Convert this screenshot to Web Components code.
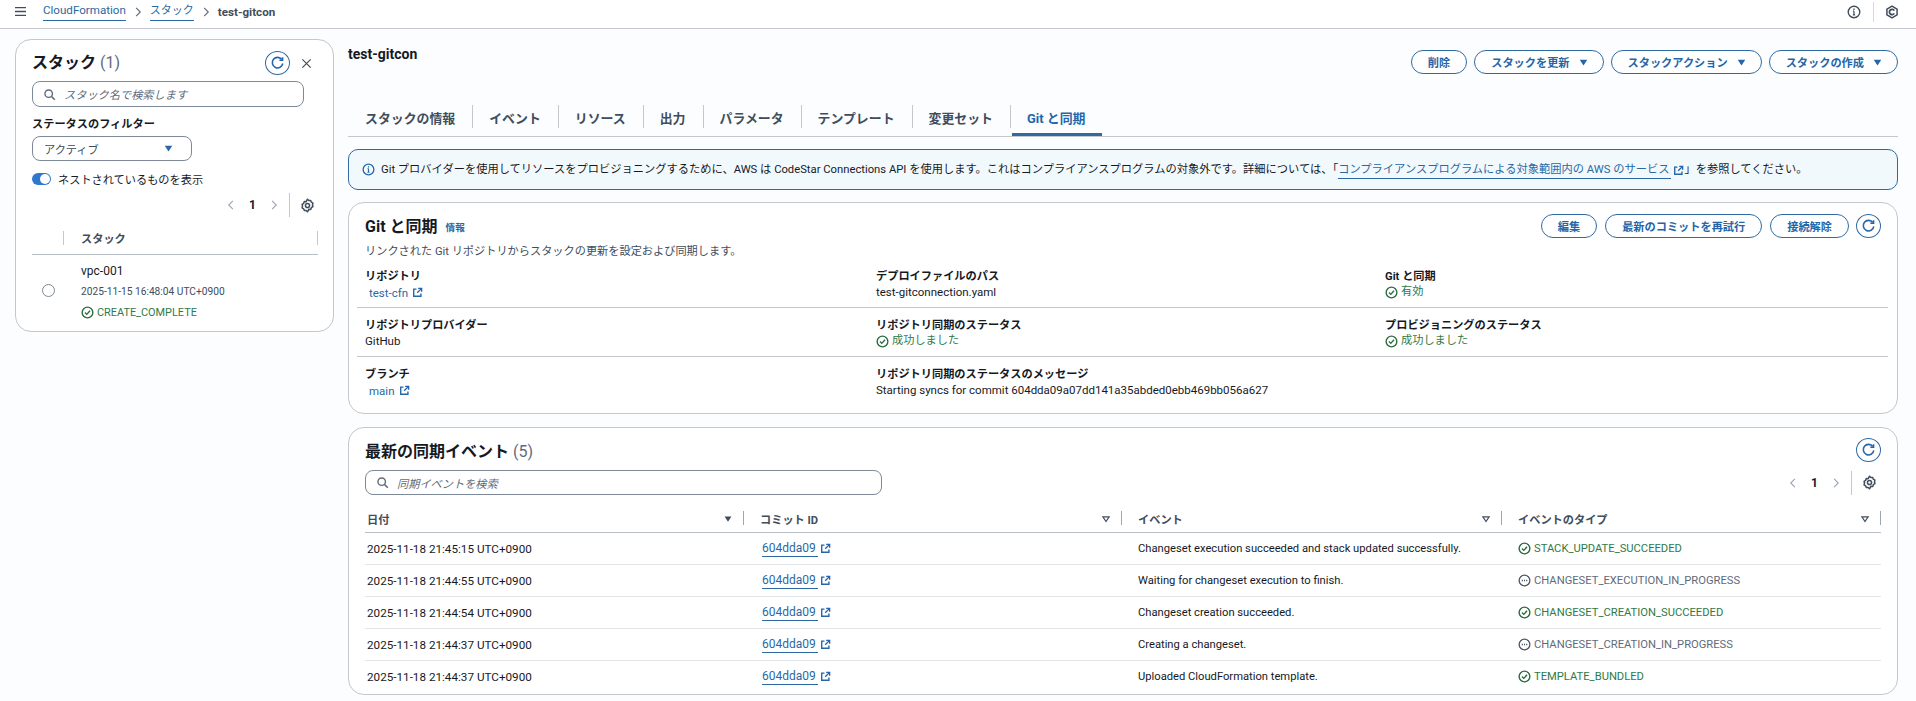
<!DOCTYPE html>
<html lang="ja">
<head>
<meta charset="utf-8">
<title>test-gitcon</title>
<style>
html, body { margin: 0; height: 100%; }
body {
    background: #fcfdfe;
    color: #16191f;
    font: 12px Roboto, "Noto Sans CJK JP", sans-serif;
    overflow: hidden;
}
</style>
</head>
<body>
<script>
const ICONS = {
    refresh: '<path d="M12.6 3.8A5.6 5.6 0 1 0 13.6 8" fill="none" stroke="currentColor" stroke-width="1.7"/><path d="M13.4 1.2v3.4H10" fill="none" stroke="currentColor" stroke-width="1.7"/>',
    close: '<path d="M2 2l12 12M14 2L2 14" fill="none" stroke="currentColor" stroke-width="1.7"/>',
    search: '<circle cx="7" cy="7" r="4.6" fill="none" stroke="currentColor" stroke-width="1.7"/><path d="M10.5 10.5L14.5 14.5" stroke="currentColor" stroke-width="2"/>',
    gear: '<path d="M8 1.3l1.4 1.4 2-.1.7 1.9 1.7 1-.5 1.9.5 1.9-1.7 1-.7 1.9-2-.1L8 14.7l-1.4-1.4-2 .1-.7-1.9-1.7-1 .5-1.9-.5-1.9 1.7-1 .7-1.9 2 .1z" fill="none" stroke="currentColor" stroke-width="1.6" stroke-linejoin="round"/><circle cx="8" cy="8" r="2.2" fill="none" stroke="currentColor" stroke-width="1.6"/>',
    external: '<path d="M6.5 3H2.5v10.5H13V9.5" fill="none" stroke="currentColor" stroke-width="2"/><path d="M9 2h5v5M14 2L7.5 8.5" fill="none" stroke="currentColor" stroke-width="2"/>',
    ok: '<circle cx="8" cy="8" r="6.6" fill="none" stroke="currentColor" stroke-width="1.7"/><path d="M4.9 8.1l2.2 2.2 4-4.4" fill="none" stroke="currentColor" stroke-width="1.7"/>',
    progress: '<circle cx="8" cy="8" r="6.6" fill="none" stroke="currentColor" stroke-width="1.6"/><path d="M4.6 8h1.4M7.3 8h1.4M10 8h1.4" stroke="currentColor" stroke-width="1.6"/>',
    info: '<circle cx="8" cy="8" r="6.6" fill="none" stroke="currentColor" stroke-width="1.6"/><path d="M8 7v4.4M6.7 11.4h2.6M6.9 7h1.1" fill="none" stroke="currentColor" stroke-width="1.4"/><path d="M8 4v1.6" stroke="currentColor" stroke-width="1.5"/>',
    menu: '<path d="M0 2.5h16M0 8h16M0 13.5h16" stroke="currentColor" stroke-width="1.9"/>',
    left: '<path d="M10.5 2.5L5 8l5.5 5.5" fill="none" stroke="currentColor" stroke-width="1.5"/>',
    right: '<path d="M5.5 2.5L11 8l-5.5 5.5" fill="none" stroke="currentColor" stroke-width="1.5"/>',
    caret: '<path d="M2.5 4h11L8 12.5z" fill="currentColor"/>',
    caretOpen: '<path d="M3 4.5h10L8 12z" fill="none" stroke="currentColor" stroke-width="1.9"/>',
    shield: '<path d="M8 1.2l5.8 3.4v6.8L8 14.8l-5.8-3.4V4.6z" fill="none" stroke="currentColor" stroke-width="1.7" stroke-linejoin="round"/><path d="M10.6 6.4a3 3 0 1 0 0 3.2" fill="none" stroke="currentColor" stroke-width="2"/>'
};

class UiIcon extends HTMLElement {
    connectedCallback() {
        const size = this.getAttribute('size') || '14';
        const name = this.getAttribute('name');
        this.attachShadow({ mode: 'open' }).innerHTML = `
            <style>
                :host { display: inline-flex; flex: none; line-height: 0; }
                svg { width: ${size}px; height: ${size}px; display: block; }
            </style>
            <svg viewBox="0 0 16 16">${ICONS[name] || ''}</svg>`;
    }
}
customElements.define('ui-icon', UiIcon);

class UiButton extends HTMLElement {
    connectedCallback() {
        const caret = this.hasAttribute('caret');
        this.attachShadow({ mode: 'open' }).innerHTML = `
            <style>
                :host {
                    display: inline-flex;
                    align-items: center;
                    justify-content: center;
                    gap: 8px;
                    box-sizing: border-box;
                    height: 24px;
                    padding: 0 ${caret ? 14 : 16}px 0 16px;
                    border: 1px solid #2f6aa3;
                    border-radius: 20px;
                    background: #fff;
                    color: #2466a8;
                    font-size: 11.2px;
                    font-weight: 700;
                    white-space: nowrap;
                }
            </style>
            <slot></slot>
            ${caret ? '<ui-icon name="caret" size="11"></ui-icon>' : ''}`;
    }
}
customElements.define('ui-button', UiButton);

class UiRefresh extends HTMLElement {
    connectedCallback() {
        this.attachShadow({ mode: 'open' }).innerHTML = `
            <style>
                :host {
                    display: inline-flex;
                    align-items: center;
                    justify-content: center;
                    flex: none;
                    box-sizing: border-box;
                    width: 25px;
                    height: 24px;
                    border: 1px solid #2f6aa3;
                    border-radius: 50%;
                    background: #fff;
                    color: #2466a8;
                }
            </style>
            <ui-icon name="refresh" size="15"></ui-icon>`;
    }
}
customElements.define('ui-refresh', UiRefresh);

class UiLink extends HTMLElement {
    connectedCallback() {
        const plain = this.hasAttribute('plain');
        this.attachShadow({ mode: 'open' }).innerHTML = `
            <style>
                :host { display: inline-flex; align-items: center; color: #2b68a3; gap: ${plain ? 4 : 2}px; vertical-align: middle; }
                .t { ${plain ? '' : 'border-bottom: 1px solid #2b68a3; padding-right: 2px; line-height: 14px; padding-bottom: 1px;'} }
                ui-icon { color: #2466a8; }
            </style>
            <span class="t"><slot></slot></span>
            <ui-icon name="external" size="11"></ui-icon>`;
    }
}
customElements.define('ui-link', UiLink);

class UiStatus extends HTMLElement {
    connectedCallback() {
        const kind = this.getAttribute('kind') || 'ok';
        this.attachShadow({ mode: 'open' }).innerHTML = `
            <style>
                :host {
                    display: inline-flex;
                    align-items: center;
                    gap: 3px;
                    color: ${kind === 'ok' ? '#2f7a47' : '#5f6b7a'};
                    white-space: nowrap;
                }
                ui-icon { color: ${kind === 'ok' ? '#2a6b3f' : '#4b5563'}; }
            </style>
            <ui-icon name="${kind}" size="13"></ui-icon>
            <span><slot></slot></span>`;
    }
}
customElements.define('ui-status', UiStatus);

class UiSearch extends HTMLElement {
    connectedCallback() {
        this.attachShadow({ mode: 'open' }).innerHTML = `
            <style>
                :host {
                    display: flex;
                    align-items: center;
                    gap: 8px;
                    box-sizing: border-box;
                    height: 26px;
                    padding: 0 10px;
                    border: 1px solid #7d8998;
                    border-radius: 8px;
                    background: #fff;
                    color: #5f6b7a;
                    font-size: 11.2px;
                    font-style: italic;
                }
            </style>
            <ui-icon name="search" size="13"></ui-icon>
            <span><slot></slot></span>`;
    }
}
customElements.define('ui-search', UiSearch);

class UiPager extends HTMLElement {
    connectedCallback() {
        this.attachShadow({ mode: 'open' }).innerHTML = `
            <style>
                :host { display: flex; align-items: center; justify-content: flex-end; height: 24px; color: #414d5c; }
                .num { width: 31px; text-align: center; font-weight: 700; color: #16191f; font-size: 12px; }
                .chev { color: #9ba7b6; }
                .div { width: 1px; height: 24px; background: #c6c6cd; margin: 0 10px 0 9px; }
            </style>
            <ui-icon class="chev" name="left" size="12"></ui-icon>
            <span class="num">1</span>
            <ui-icon class="chev" name="right" size="12"></ui-icon>
            <span class="div"></span>
            <ui-icon name="gear" size="15"></ui-icon>`;
    }
}
customElements.define('ui-pager', UiPager);

class UiTopbar extends HTMLElement {
    connectedCallback() {
        this.attachShadow({ mode: 'open' }).innerHTML = `
            <style>
                :host {
                    display: flex;
                    align-items: center;
                    box-sizing: border-box;
                    height: 29px;
                    padding: 0 17px 5px 15px;
                    border-bottom: 1px solid #c6c6cd;
                    background: #fff;
                    font-size: 11.6px;
                }
                ui-icon { color: #414d5c; }
                a { color: #2b68a3; border-bottom: 1px solid #2b68a3; line-height: 15px; padding-bottom: 2px; }
                .jp { font-size: 11px; }
                .crumbs { display: flex; align-items: center; margin-left: 17px; gap: 6px; }
                .sep { color: #5f6b7a; }
                b { color: #414d5c; }
                .end { margin-left: auto; display: flex; align-items: center; }
                .line { width: 1px; height: 20px; background: #d5dbdb; margin: 0 11px 0 12px; }
            </style>
            <ui-icon name="menu" size="11"></ui-icon>
            <div class="crumbs">
                <a>CloudFormation</a>
                <ui-icon class="sep" name="right" size="12"></ui-icon>
                <a class="jp">スタック</a>
                <ui-icon class="sep" name="right" size="12"></ui-icon>
                <b>test-gitcon</b>
            </div>
            <div class="end">
                <ui-icon name="info" size="14"></ui-icon>
                <span class="line"></span>
                <ui-icon name="shield" size="14"></ui-icon>
            </div>`;
    }
}
customElements.define('ui-topbar', UiTopbar);

class StackPanel extends HTMLElement {
    connectedCallback() {
        this.attachShadow({ mode: 'open' }).innerHTML = `
            <style>
                :host {
                    display: block;
                    box-sizing: border-box;
                    flex: none;
                    width: 319px;
                    height: 293px;
                    padding: 11px 16px 0 16px;
                    border: 1px solid #c6c6cd;
                    border-radius: 16px;
                    background: #fff;
                    font-size: 11.2px;
                }
                .head { display: flex; align-items: center; height: 24px; }
                h2 { margin: 0; font-size: 16px; line-height: 24px; font-weight: 700; color: #16191f; }
                h2 span { font-weight: 400; color: #5f6b7a; }
                .head ui-refresh { margin-left: auto; }
                .head ui-icon { margin: 0 5px 0 11px; color: #414d5c; }
                ui-search { margin-top: 6px; width: 272px; }
                .label { margin-top: 10px; font-weight: 700; line-height: 16px; color: #16191f; }
                .select {
                    display: flex; align-items: center; justify-content: space-between;
                    box-sizing: border-box; width: 160px; height: 25px; margin-top: 3px;
                    padding: 0 17px 0 11px;
                    border: 1px solid #7d8998; border-radius: 8px; color: #414d5c;
                }
                .select ui-icon { color: #2b68a3; }
                .toggle { display: flex; align-items: center; gap: 7px; margin-top: 10px; height: 16px; color: #16191f; }
                .track { width: 19px; height: 12px; border-radius: 6px; background: #2f78d0; position: relative; }
                .track::after { content: ''; position: absolute; right: 1px; top: 1px; width: 10px; height: 10px; border-radius: 50%; background: #fff; }
                ui-pager { margin-top: 6px; margin-right: 2px; }
                .thead {
                    display: flex; align-items: center; height: 32px; margin-top: 5px; margin-right: -1px;
                    border-bottom: 1px solid #b8bec6; font-weight: 700; color: #414d5c;
                }
                .thead i { width: 1px; height: 14px; background: #c6c6cd; }
                .thead i:first-child { margin-left: 31px; }
                .thead span { flex: 1; margin-left: 17px; }
                .row { display: flex; }
                .radio { width: 13px; height: 13px; box-sizing: border-box; border: 1px solid #7d8998; border-radius: 50%; margin: 29px 0 0 10px; }
                .cell { margin-left: 26px; display: grid; padding-top: 6px; }
                .cell div { height: 21px; line-height: 20px; }
                .cell div:last-child { line-height: 19px; }
                .name { font-size: 12px; color: #16191f; }
                .date { font-size: 10.2px; color: #414d5c; }
                ui-status { font-size: 10.9px; }
            </style>
            <div class="head">
                <h2>スタック <span>(1)</span></h2>
                <ui-refresh></ui-refresh>
                <ui-icon name="close" size="11"></ui-icon>
            </div>
            <ui-search>スタック名で検索します</ui-search>
            <div class="label">ステータスのフィルター</div>
            <div class="select">アクティブ<ui-icon name="caret" size="11"></ui-icon></div>
            <div class="toggle"><span class="track"></span>ネストされているものを表示</div>
            <ui-pager></ui-pager>
            <div class="thead"><i></i><span>スタック</span><i></i></div>
            <div class="row">
                <span class="radio"></span>
                <div class="cell">
                    <div class="name">vpc-001</div>
                    <div class="date">2025-11-15 16:48:04 UTC+0900</div>
                    <div><ui-status kind="ok">CREATE_COMPLETE</ui-status></div>
                </div>
            </div>`;
    }
}
customElements.define('stack-panel', StackPanel);

class UiTabs extends HTMLElement {
    connectedCallback() {
        const tabs = ['スタックの情報', 'イベント', 'リソース', '出力', 'パラメータ', 'テンプレート', '変更セット', 'Git と同期'];
        this.attachShadow({ mode: 'open' }).innerHTML = `
            <style>
                :host {
                    display: flex;
                    height: 33px;
                    border-bottom: 1px solid #c6c6cd;
                    font-size: 12.9px;
                    font-weight: 700;
                    color: #414d5c;
                }
                .tab { position: relative; display: flex; align-items: center; padding: 0 17px 5px; }
                .tab + .tab::before { content: ''; position: absolute; left: 0; top: 2px; height: 23px; width: 1px; background: #c6c6cd; }
                .tab.on { color: #2466a8; }
                .tab.on::after { content: ''; position: absolute; left: 2px; right: 0; bottom: 0; height: 3px; background: #2f6aa3; }
            </style>
            ${tabs.map((t, i) => `<div class="tab ${i === tabs.length - 1 ? 'on' : ''}">${t}</div>`).join('')}`;
    }
}
customElements.define('ui-tabs', UiTabs);

class UiAlert extends HTMLElement {
    connectedCallback() {
        this.attachShadow({ mode: 'open' }).innerHTML = `
            <style>
                :host {
                    display: flex;
                    align-items: center;
                    gap: 6px;
                    box-sizing: border-box;
                    height: 41px;
                    padding: 0 13px;
                    border: 1px solid #2f6aa3;
                    border-radius: 10px;
                    background: #f2f9fd;
                    color: #16191f;
                    font-size: 11.25px;
                    white-space: nowrap;
                }
                ui-icon { color: #2466a8; }
            </style>
            <ui-icon name="info" size="13"></ui-icon>
            <span><slot></slot></span>`;
    }
}
customElements.define('ui-alert', UiAlert);

class UiCard extends HTMLElement {
    connectedCallback() {
        this.attachShadow({ mode: 'open' }).innerHTML = `
            <style>
                :host {
                    display: block;
                    box-sizing: border-box;
                    border: 1px solid #c6c6cd;
                    border-radius: 16px;
                    background: #fff;
                }
            </style>
            <slot></slot>`;
    }
}
customElements.define('ui-card', UiCard);

class KvItem extends HTMLElement {
    connectedCallback() {
        this.attachShadow({ mode: 'open' }).innerHTML = `
            <style>
                :host { display: block; line-height: 16px; }
                .k { font-weight: 700; color: #16191f; font-size: 11.2px; margin-top: 2px; }
                .v { color: #16191f; font-size: 11.5px; margin-top: -1px; }
                ::slotted(ui-status) { font-size: 11.2px; }
            </style>
            <div class="k">${this.getAttribute('label')}</div>
            <div class="v"><slot></slot></div>`;
    }
}
customElements.define('kv-item', KvItem);

class GitSync extends HTMLElement {
    connectedCallback() {
        this.attachShadow({ mode: 'open' }).innerHTML = `
            <style>
                :host { display: block; }
                ui-card { height: 212px; padding: 11px 16px 0 16px; }
                .head { display: flex; align-items: center; height: 24px; }
                h2 { margin: -2px 0 0; font-size: 16px; font-weight: 700; color: #16191f; }
                .info { margin-left: 8px; font-size: 9.6px; font-weight: 700; color: #2b68a3; position: relative; top: 1px; }
                .acts { margin-left: auto; display: flex; gap: 8px; align-items: center; }
                .acts ui-refresh { margin-left: -1px; }
                .desc { color: #414d5c; line-height: 16px; margin-top: 6px; font-size: 11.2px; }
                .grid { display: grid; grid-template-columns: 519px 509px 1fr; margin: 7px -7px 0 -8px; }
                kv-item { height: 40px; padding-top: 8px; border-bottom: 1px solid #c6c6cd; }
                kv-item.first { padding-top: 0; }
                kv-item.last { border-bottom: 0; }
                .col1 { padding-left: 8px; }
                .pad { margin-left: 4px; }
            </style>
            <ui-card>
                <div class="head">
                    <h2>Git と同期</h2><span class="info">情報</span>
                    <div class="acts">
                        <ui-button>編集</ui-button>
                        <ui-button>最新のコミットを再試行</ui-button>
                        <ui-button>接続解除</ui-button>
                        <ui-refresh></ui-refresh>
                    </div>
                </div>
                <div class="desc">リンクされた Git リポジトリからスタックの更新を設定および同期します。</div>
                <div class="grid">
                    <kv-item class="first col1" label="リポジトリ"><ui-link class="pad" plain>test-cfn</ui-link></kv-item>
                    <kv-item class="first" label="デプロイファイルのパス">test-gitconnection.yaml</kv-item>
                    <kv-item class="first" label="Git と同期"><ui-status>有効</ui-status></kv-item>
                    <kv-item class="col1" label="リポジトリプロバイダー">GitHub</kv-item>
                    <kv-item label="リポジトリ同期のステータス"><ui-status>成功しました</ui-status></kv-item>
                    <kv-item label="プロビジョニングのステータス"><ui-status>成功しました</ui-status></kv-item>
                    <kv-item class="last col1" label="ブランチ"><ui-link class="pad" plain>main</ui-link></kv-item>
                    <kv-item class="last" label="リポジトリ同期のステータスのメッセージ">Starting syncs for commit 604dda09a07dd141a35abded0ebb469bb056a627</kv-item>
                    <kv-item class="last" label=""></kv-item>
                </div>
            </ui-card>`;
    }
}
customElements.define('git-sync', GitSync);

class SyncEvents extends HTMLElement {
    connectedCallback() {
        const rows = [
            ['2025-11-18 21:45:15 UTC+0900', 'Changeset execution succeeded and stack updated successfully.', 'ok', 'STACK_UPDATE_SUCCEEDED'],
            ['2025-11-18 21:44:55 UTC+0900', 'Waiting for changeset execution to finish.', 'progress', 'CHANGESET_EXECUTION_IN_PROGRESS'],
            ['2025-11-18 21:44:54 UTC+0900', 'Changeset creation succeeded.', 'ok', 'CHANGESET_CREATION_SUCCEEDED'],
            ['2025-11-18 21:44:37 UTC+0900', 'Creating a changeset.', 'progress', 'CHANGESET_CREATION_IN_PROGRESS'],
            ['2025-11-18 21:44:37 UTC+0900', 'Uploaded CloudFormation template.', 'ok', 'TEMPLATE_BUNDLED']
        ];
        const heads = [['日付', 'caret'], ['コミット ID', 'caretOpen'], ['イベント', 'caretOpen'], ['イベントのタイプ', 'caretOpen']];
        this.attachShadow({ mode: 'open' }).innerHTML = `
            <style>
                :host { display: block; }
                ui-card { height: 268px; padding: 10px 16px 0 16px; }
                .head { display: flex; align-items: center; justify-content: space-between; height: 24px; }
                h2 { margin: 0; font-size: 16px; font-weight: 700; color: #16191f; }
                h2 span { font-weight: 400; color: #5f6b7a; }
                .tools { display: flex; justify-content: space-between; align-items: center; margin-top: 8px; height: 25px; }
                ui-search { width: 517px; height: 25px; }
                ui-pager { margin-right: 4px; }
                .grid { display: grid; grid-template-columns: 379px 378px 380px 379px; margin-top: 10px; }
                .th {
                    display: flex; align-items: center; height: 27px; padding-left: 2px; position: relative;
                    border-bottom: 1px solid #b8bec6; font-weight: 700; color: #414d5c; font-size: 11.2px;
                }
                .th + .th { padding-left: 16px; }
                .th ui-icon { margin-left: auto; margin-right: 11px; }
                .th::after { content: ''; position: absolute; right: 0; top: 6px; height: 14px; width: 1px; background: #9ba7b6; }
                .td {
                    display: flex; align-items: center; height: 31px; padding-left: 2px;
                    border-bottom: 1px solid #e2e5e8; color: #16191f; font-size: 11.2px;
                }
                .td.c1 { font-size: 11.7px; }
                .td.c2 { padding-left: 18px; font-size: 12px; }
                .td.c3, .td.c4 { padding-left: 16px; }
                .last { border-bottom: 0; }
            </style>
            <ui-card>
                <div class="head">
                    <h2>最新の同期イベント <span>(5)</span></h2>
                    <ui-refresh></ui-refresh>
                </div>
                <div class="tools">
                    <ui-search>同期イベントを検索</ui-search>
                    <ui-pager></ui-pager>
                </div>
                <div class="grid">
                    ${heads.map(h => `<div class="th">${h[0]}<ui-icon name="${h[1]}" size="10"></ui-icon></div>`).join('')}
                    ${rows.map((r, i) => {
                        const l = i === rows.length - 1 ? 'last' : '';
                        return `<div class="td c1 ${l}">${r[0]}</div>
                            <div class="td c2 ${l}"><ui-link>604dda09</ui-link></div>
                            <div class="td c3 ${l}">${r[1]}</div>
                            <div class="td c4 ${l}"><ui-status kind="${r[2]}">${r[3]}</ui-status></div>`;
                    }).join('')}
                </div>
            </ui-card>`;
    }
}
customElements.define('sync-events', SyncEvents);

class StackPage extends HTMLElement {
    connectedCallback() {
        this.attachShadow({ mode: 'open' }).innerHTML = `
            <style>
                :host { display: block; }
                .body { display: flex; gap: 14px; padding: 10px 18px 0 15px; align-items: flex-start; }
                main { flex: 1; min-width: 0; }
                .title { display: flex; justify-content: space-between; align-items: flex-start; height: 64px; padding-top: 11px; box-sizing: border-box; }
                h1 { margin: 0; font-size: 14px; line-height: 26px; font-weight: 700; color: #16191f; position: relative; top: -9px; }
                .btns { display: flex; gap: 7px; }
                ui-alert { margin-top: 12px; }
                git-sync { margin-top: 12px; }
                sync-events { margin-top: 13px; }
            </style>
            <ui-topbar></ui-topbar>
            <div class="body">
                <stack-panel></stack-panel>
                <main>
                    <div class="title">
                        <h1>test-gitcon</h1>
                        <div class="btns">
                            <ui-button>削除</ui-button>
                            <ui-button caret>スタックを更新</ui-button>
                            <ui-button caret>スタックアクション</ui-button>
                            <ui-button caret>スタックの作成</ui-button>
                        </div>
                    </div>
                    <ui-tabs></ui-tabs>
                    <ui-alert>Git プロバイダーを使用してリソースをプロビジョニングするために、AWS は CodeStar Connections API を使用します。これはコンプライアンスプログラムの対象外です。詳細については、「<ui-link>コンプライアンスプログラムによる対象範囲内の AWS のサービス</ui-link>」を参照してください。</ui-alert>
                    <git-sync></git-sync>
                    <sync-events></sync-events>
                </main>
            </div>`;
    }
}
customElements.define('stack-page', StackPage);

document.body.appendChild(document.createElement('stack-page'));
</script>
</body>
</html>
